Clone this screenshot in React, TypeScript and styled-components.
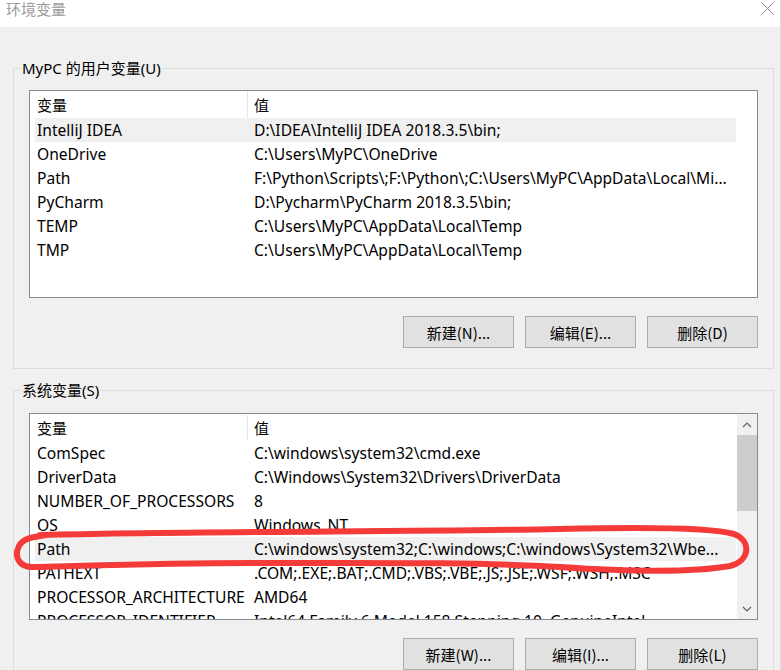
import React from "react";
import styled, { createGlobalStyle } from "styled-components";

const Global = createGlobalStyle`
  html, body { margin: 0; padding: 0; background: #f0f0f0; }
  body { font-family: "Noto Sans", "Noto Sans CJK SC", sans-serif; }
  * { box-sizing: border-box; }
`;

const FONT = `"Noto Sans", "Noto Sans CJK SC", sans-serif`;

const Window = styled.div`
  position: relative;
  width: 781px;
  height: 670px;
  overflow: hidden;
  display: flex;
  flex-direction: column;
  background: #f0f0f0;
  border-right: 1px solid #dedede;
  font-family: ${FONT};
  color: #000;
`;

const TitleBar = styled.div`
  height: 27px;
  flex: none;
  background: #fff;
  display: flex;
  align-items: flex-start;
  justify-content: space-between;
  padding: 0 6px 0 6px;
`;

const Title = styled.div`
  font-size: 15px;
  line-height: 20px;
  margin-top: -1px;
  color: #9b9b9b;
  font-family: "Noto Sans CJK SC", sans-serif;
`;

const CloseBtn = styled.div`
  width: 13px;
  height: 13px;
  margin-top: 2px;
  display: flex;
`;

const Body = styled.div`
  flex: 1;
  padding: 31px 0 0 13px;
  display: flex;
  flex-direction: column;
`;

const Group = styled.fieldset<{ $gap?: number }>`
  width: 761px;
  margin: ${(p) => p.$gap ?? 0}px 0 0 0;
  padding: 0 0 20px 6px;
  border: 1px solid #dcdcdc;
  min-width: 0;
  flex: none;
`;

const Legend = styled.legend`
  font-size: 15px;
  line-height: 20px;
  padding: 0 2px;
  color: #000;
`;

const GroupInner = styled.div<{ $top: number }>`
  padding: ${(p) => p.$top}px 15px 0 9px;
  display: flex;
  flex-direction: column;
`;

const List = styled.div<{ $h: number }>`
  height: ${(p) => p.$h}px;
  border: 1px solid #868a91;
  background: #fff;
  display: grid;
  grid-template-columns: 1fr 20px;
  overflow: hidden;
`;

const ListMain = styled.div`
  display: flex;
  flex-direction: column;
  overflow: hidden;
  padding-right: 1px;
`;

const Header = styled.div`
  height: 27px;
  flex: none;
  display: grid;
  grid-template-columns: 218px 1fr;
  margin-right: 1px;
`;

const HeadCell = styled.div<{ $divider?: boolean }>`
  font-size: 15px;
  line-height: 26px;
  padding-left: ${(p) => (p.$divider ? 7 : 6)}px;
  border-right: ${(p) => (p.$divider ? "1px solid #e5e5e5" : "none")};
  margin: 1px 0 0;
  height: 26px;
`;

const Row = styled.div<{ $sel?: boolean }>`
  height: 24px;
  flex: none;
  margin-left: 5px;
  display: grid;
  grid-template-columns: 212px 1fr;
  background: ${(p) => (p.$sel ? "#f0f0f0" : "transparent")};
`;

const Cell = styled.div<{ $pad: number }>`
  font-size: 15.6px;
  line-height: 24px;
  padding-left: ${(p) => p.$pad}px;
  white-space: nowrap;
  overflow: hidden;
`;

const ScrollBar = styled.div`
  background: #f0f0f0;
  display: flex;
  flex-direction: column;
`;

const ScrollArrow = styled.div`
  height: 21px;
  flex: none;
  display: flex;
  align-items: center;
  justify-content: center;
`;

const Thumb = styled.div`
  height: 76px;
  flex: none;
  background: #cdcdcd;
`;

const Track = styled.div`
  flex: 1;
`;

const Buttons = styled.div<{ $top: number }>`
  display: flex;
  justify-content: flex-end;
  gap: 11px;
  margin-top: ${(p) => p.$top}px;
`;

const Button = styled.div`
  width: 111px;
  height: 32px;
  background: #e1e1e1;
  border: 1px solid #adadad;
  display: flex;
  align-items: center;
  justify-content: center;
  font-size: 15px;
  font-family: "Noto Sans CJK SC", sans-serif;
`;

const Annotation = styled.svg`
  position: absolute;
  left: 0;
  top: 0;
  pointer-events: none;
`;

type Item = { name: string; value: string; sel?: boolean };

const userVars: Item[] = [
  { name: "IntelliJ IDEA", value: "D:\\IDEA\\IntelliJ IDEA 2018.3.5\\bin;", sel: true },
  { name: "OneDrive", value: "C:\\Users\\MyPC\\OneDrive" },
  { name: "Path", value: "F:\\Python\\Scripts\\;F:\\Python\\;C:\\Users\\MyPC\\AppData\\Local\\Mi..." },
  { name: "PyCharm", value: "D:\\Pycharm\\PyCharm 2018.3.5\\bin;" },
  { name: "TEMP", value: "C:\\Users\\MyPC\\AppData\\Local\\Temp" },
  { name: "TMP", value: "C:\\Users\\MyPC\\AppData\\Local\\Temp" },
];

const sysVars: Item[] = [
  { name: "ComSpec", value: "C:\\windows\\system32\\cmd.exe" },
  { name: "DriverData", value: "C:\\Windows\\System32\\Drivers\\DriverData" },
  { name: "NUMBER_OF_PROCESSORS", value: "8" },
  { name: "OS", value: "Windows_NT" },
  { name: "Path", value: "C:\\windows\\system32;C:\\windows;C:\\windows\\System32\\Wbe...", sel: true },
  { name: "PATHEXT", value: ".COM;.EXE;.BAT;.CMD;.VBS;.VBE;.JS;.JSE;.WSF;.WSH;.MSC" },
  { name: "PROCESSOR_ARCHITECTURE", value: "AMD64" },
  { name: "PROCESSOR_IDENTIFIER", value: "Intel64 Family 6 Model 158 Stepping 10, GenuineIntel" },
];

const Chevron = ({ up }: { up?: boolean }) => (
  <svg width="10" height="6" viewBox="0 0 10 6">
    <path
      d={up ? "M1 5 L5 1 L9 5" : "M1 1 L5 5 L9 1"}
      fill="none"
      stroke="#606060"
      strokeWidth="1.2"
    />
  </svg>
);

const VarList = ({ items, h, scroll }: { items: Item[]; h: number; scroll?: boolean }) => (
  <List $h={h}>
    <ListMain>
      <Header>
        <HeadCell $divider>变量</HeadCell>
        <HeadCell>值</HeadCell>
      </Header>
      {items.map((it) => (
        <Row key={it.name} $sel={it.sel}>
          <Cell $pad={2}>{it.name}</Cell>
          <Cell $pad={7}>{it.value}</Cell>
        </Row>
      ))}
    </ListMain>
    {scroll ? (
      <ScrollBar>
        <ScrollArrow>
          <Chevron up />
        </ScrollArrow>
        <Thumb />
        <Track />
        <ScrollArrow>
          <Chevron />
        </ScrollArrow>
      </ScrollBar>
    ) : (
      <div />
    )}
  </List>
);

export default function App() {
  return (
    <>
      <Global />
      <Window>
        <TitleBar>
          <Title>环境变量</Title>
          <CloseBtn>
            <svg width="13" height="13" viewBox="0 0 13 13">
              <path d="M0.5 0.5 L12.5 12.5 M12.5 0.5 L0.5 12.5" stroke="#8a8a8a" strokeWidth="1" />
            </svg>
          </CloseBtn>
        </TitleBar>
        <Body>
          <Group>
            <Legend>MyPC 的用户变量(U)</Legend>
            <GroupInner $top={12}>
              <VarList items={userVars} h={208} />
              <Buttons $top={18}>
                <Button>新建(N)...</Button>
                <Button>编辑(E)...</Button>
                <Button>删除(D)</Button>
              </Buttons>
            </GroupInner>
          </Group>
          <Group $gap={11}>
            <Legend>系统变量(S)</Legend>
            <GroupInner $top={13}>
              <VarList items={sysVars} h={207} scroll />
              <Buttons $top={18}>
                <Button>新建(W)...</Button>
                <Button>编辑(I)...</Button>
                <Button>删除(L)</Button>
              </Buttons>
            </GroupInner>
          </Group>
        </Body>
        <Annotation width="781" height="670" viewBox="0 0 781 670">
          <path
            d="M40 535 C 200 531, 420 532, 560 529 C 640 527, 710 527, 734 534 C 752 541, 750 561, 730 566 C 690 573, 620 571, 560 567 C 470 562, 380 563, 250 563 C 160 563, 80 566, 35 567 C 18 568, 14 556, 19 546 C 23 539, 30 537, 48 535"
            fill="none"
            stroke="#f53a3a"
            strokeWidth="6"
            strokeLinecap="round"
            strokeLinejoin="round"
          />
        </Annotation>
      </Window>
    </>
  );
}
